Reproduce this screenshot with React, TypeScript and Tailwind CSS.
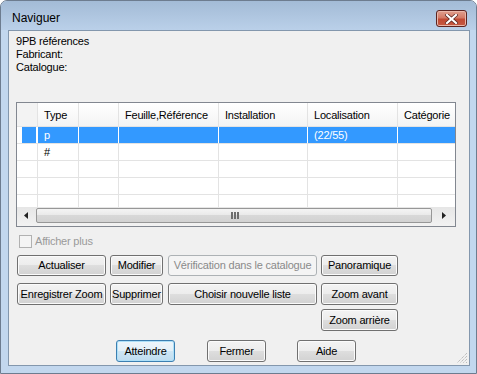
import React from "react";

const font = "font-['Liberation_Sans',Arial,sans-serif]";

const columns = [
  { label: "", cls: "w-[21px]" },
  { label: "Type", cls: "w-[41px]" },
  { label: "", cls: "w-[40px]" },
  { label: "Feuille,Référence", cls: "w-[100px]" },
  { label: "Installation", cls: "w-[89px]" },
  { label: "Localisation", cls: "w-[90px]" },
  { label: "Catégorie", cls: "w-[80px]" },
];

const rows = [
  { cells: ["", "p", "", "", "", "(22/55)", ""], selected: true },
  { cells: ["", "#", "", "", "", "", ""], selected: false },
  { cells: ["", "", "", "", "", "", ""], selected: false },
  { cells: ["", "", "", "", "", "", ""], selected: false },
  { cells: ["", "", "", "", "", "", ""], selected: false },
];

const btnBase =
  "h-[22px] shrink-0 rounded-[3px] border text-[11px] leading-none flex items-center justify-center whitespace-nowrap";
const btnNormal =
  "border-[#707070] text-black bg-[linear-gradient(to_bottom,#f3f3f3_0%,#ececec_50%,#dedede_50%,#d2d2d2_100%)] shadow-[inset_0_0_0_1px_#fbfbfb]";
const btnDisabled = "border-[#adb2b5] text-[#8a8a8a] bg-[#f4f4f4]";
const btnFocus =
  "border-[#3c7fb1] text-black bg-[linear-gradient(to_bottom,#eef6fb_0%,#e3f0f8_50%,#cfe6f4_50%,#bfdcef_100%)] shadow-[inset_0_0_0_1px_#aee0f8]";

function Button({
  label,
  className,
  disabled,
  focus,
}: {
  label: string;
  className: string;
  disabled?: boolean;
  focus?: boolean;
}) {
  const look = disabled ? btnDisabled : focus ? btnFocus : btnNormal;
  return <div className={`${btnBase} ${look} ${className}`}>{label}</div>;
}

function Grid() {
  return (
    <div className="ml-[7px] mt-[28px] w-[440px] h-[125px] border border-[#828790] bg-white flex flex-col overflow-hidden">
      {/* header */}
      <div className="h-[24px] flex shrink-0 border-b border-[#e3e3e3] bg-[linear-gradient(to_bottom,#ffffff,#f4f4f4)]">
        {columns.map((c, i) => (
          <div
            key={i}
            className={`${c.cls} shrink-0 h-full border-r border-[#e3e3e3] pl-[6px] pt-[1px] flex items-center text-[11px] whitespace-nowrap ${
              i === 0 ? "bg-[#f3f3f3]" : ""
            }`}
          >
            {c.label}
          </div>
        ))}
      </div>
      {/* rows */}
      <div className="h-[80px] overflow-hidden shrink-0">
        {rows.map((r, ri) => (
          <div key={ri} className="h-[17px] flex border-b border-[#e3e3e3]">
            {r.cells.map((v, ci) => (
              <div
                key={ci}
                className={`${columns[ci].cls} shrink-0 h-full border-r ${
                  r.selected ? "border-[#ffffff]" : "border-[#e3e3e3]"
                } ${r.selected && ci > 0 ? "bg-[#3399ff] text-white" : ""} flex items-center pl-[6px] text-[11px] whitespace-nowrap`}
              >
                {ci === 0 && r.selected ? (
                  <div className="h-full w-full -ml-[1px] bg-[#3399ff]" />
                ) : (
                  v
                )}
              </div>
            ))}
          </div>
        ))}
      </div>
      {/* horizontal scrollbar */}
      <div className="h-[19px] shrink-0 flex items-start bg-[linear-gradient(to_bottom,#e6e6e6,#f2f2f2)]">
        <div className="w-[17px] h-[17px] flex items-center justify-center">
          <svg width="4" height="7" viewBox="0 0 4 7">
            <path d="M4 0 L0 3.5 L4 7 Z" fill="#222" />
          </svg>
        </div>
        <div className="ml-[2px] mt-[1px] w-[396px] h-[15px] rounded-[2px] border border-[#979797] bg-[linear-gradient(to_bottom,#f4f4f4_0%,#e9e9e9_50%,#d8d8d8_50%,#d2d2d2_100%)] flex items-center justify-center">
          <svg width="9" height="7" viewBox="0 0 9 7" className="ml-[2px]">
            <rect x="0" y="0" width="2" height="7" fill="#6f6f6f" />
            <rect x="3" y="0" width="2" height="7" fill="#6f6f6f" />
            <rect x="6" y="0" width="2" height="7" fill="#6f6f6f" />
          </svg>
        </div>
        <div className="ml-[1px] w-[21px] h-[17px] flex items-center justify-center">
          <svg width="4" height="7" viewBox="0 0 4 7">
            <path d="M0 0 L4 3.5 L0 7 Z" fill="#222" />
          </svg>
        </div>
      </div>
    </div>
  );
}

export default function App() {
  return (
    <div className={`w-[477px] h-[374px] bg-white ${font} text-black tracking-[-0.2px]`}>
      <div className="w-full h-full rounded-t-[7px] border border-[#6d7c8f] flex flex-col overflow-hidden bg-[#c2d7ee]">
        {/* title bar */}
        <div className="h-[29px] shrink-0 flex items-start bg-[linear-gradient(to_bottom,#a3bbd6,#bad0e9)]">
          <span className="ml-[11px] mt-[10px] text-[12px] leading-[14px] tracking-normal">Naviguer</span>
          <div className="ml-auto mr-[9px] mt-[9px] w-[31px] h-[17px] rounded-[3px] border border-[#5d2420] bg-[linear-gradient(to_bottom,#e0a08f_0%,#d47a66_45%,#c04a34_55%,#c65a43_100%)] flex items-center justify-center shadow-[inset_0_0_0_1px_#e9b6a9]">
            <svg width="13" height="10" viewBox="0 0 13 10">
              <path
                d="M2 1 L6.5 5 M11 1 L6.5 5 M2 9 L6.5 5 M11 9 L6.5 5"
                stroke="#5a2520"
                strokeWidth="3.6"
                strokeLinecap="square"
              />
              <path
                d="M2 1 L11 9 M11 1 L2 9"
                stroke="#ffffff"
                strokeWidth="2.2"
                strokeLinecap="square"
              />
            </svg>
          </div>
        </div>

        {/* client area */}
        <div className="flex-1 flex pl-[7px] pr-[6px] pb-[7px]">
          <div className="relative flex-1 border border-[#8397ad] bg-[#f0f0f0] flex flex-col text-[11px]">
            <div className="pt-[3px] pl-[7px]">
              <div className="h-[14px] leading-[14px]">9PB références</div>
              <div className="h-[13px] leading-[13px]">Fabricant:</div>
              <div className="h-[13px] leading-[13px]">Catalogue:</div>
            </div>

            <Grid />

            <div className="mt-[8px] ml-[10px] h-[13px] flex items-center">
              <div className="w-[13px] h-[13px] border border-[#b1b1b1] bg-[#f4f4f4]" />
              <span className="ml-[3px] text-[#9a9a9a] leading-[13px]">Afficher plus</span>
            </div>

            <div className="mt-[7px] flex">
              <Button label="Actualiser" className="ml-[8px] w-[89px] !h-[21px]" />
              <Button label="Modifier" className="ml-[4px] w-[53px] !h-[21px]" />
              <Button
                label="Vérification dans le catalogue"
                className="ml-[5px] w-[149px] !h-[21px]"
                disabled
              />
              <Button label="Panoramique" className="ml-[4px] w-[77px] !h-[21px]" />
            </div>

            <div className="mt-[7px] flex">
              <Button label="Enregistrer Zoom" className="ml-[8px] w-[89px]" />
              <Button label="Supprimer" className="ml-[4px] w-[53px]" />
              <Button label="Choisir nouvelle liste" className="ml-[5px] w-[149px]" />
              <Button label="Zoom avant" className="ml-[4px] w-[77px]" />
            </div>

            <div className="mt-[4px] flex">
              <Button label="Zoom arrière" className="ml-[312px] w-[77px]" />
            </div>

            <div className="mt-[9px] flex">
              <Button label="Atteindre" className="ml-[107px] w-[59px]" focus />
              <Button label="Fermer" className="ml-[32px] w-[59px]" />
              <Button label="Aide" className="ml-[31px] w-[59px]" />
            </div>

            {/* size grip */}
            <svg
              className="absolute right-[1px] bottom-[1px]"
              width="12"
              height="12"
              viewBox="0 0 12 12"
            >
              <path
                d="M11 1 L1 11 M11 4 L4 11 M11 7 L7 11 M11 10 L10 11"
                stroke="#a7a7a7"
                strokeWidth="1"
                strokeDasharray="1 1"
              />
            </svg>
          </div>
        </div>
      </div>
    </div>
  );
}
